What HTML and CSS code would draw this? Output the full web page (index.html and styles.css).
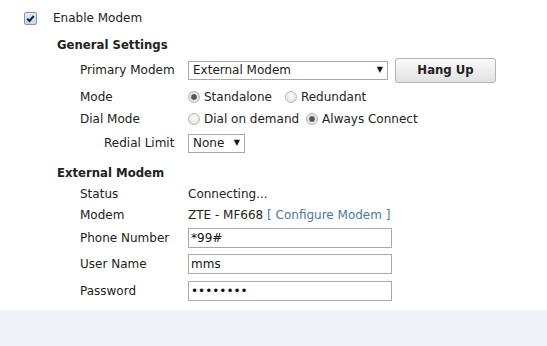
FILE: index.html
```html
<!DOCTYPE html>
<html lang="en">
  <head>
    <meta charset="UTF-8" />
    <meta name="viewport" content="width=device-width, initial-scale=1.0" />
    <title>Modem</title>
    <link rel="stylesheet" href="styles.css">
  </head>
  <body>
    <form class="modem">
      <label class="enable">
        <span class="check">
          <svg width="9" height="9" viewBox="0 0 9 9"><path d="M1.2 4.8 L3.5 7 L7.8 1.8" fill="none" stroke="#222" stroke-width="2"/></svg>
        </span>
        Enable Modem
      </label>

      <div class="section">
        <h2 class="head head-general">General Settings</h2>
        <div class="row row-primary">
          <span class="label">Primary Modem</span>
          <span class="select wide"><select><option>External Modem</option></select></span>
          <button type="button" class="hang">Hang Up</button>
        </div>
        <div class="row row-mode">
          <span class="label">Mode</span>
          <label class="opt"><input type="radio" name="mode" checked /> Standalone</label>
          <label class="opt"><input type="radio" name="mode" /> Redundant</label>
        </div>
        <div class="row row-dial">
          <span class="label">Dial Mode</span>
          <label class="opt"><input type="radio" name="dial" /> Dial on demand</label>
          <label class="opt"><input type="radio" name="dial" checked /> Always Connect</label>
        </div>
        <div class="row row-redial">
          <span class="label sub">Redial Limit</span>
          <span class="select small"><select><option>None</option></select></span>
        </div>

        <h2 class="head head-ext">External Modem</h2>
        <div class="row row-status">
          <span class="label">Status</span>
          <span>Connecting...</span>
        </div>
        <div class="row row-modem">
          <span class="label">Modem</span>
          <span>ZTE - MF668 <a href="#" class="link">[ Configure Modem ]</a></span>
        </div>
        <div class="row row-phone">
          <span class="label">Phone Number</span>
          <input type="text" class="field" value="*99#" />
        </div>
        <div class="row row-user">
          <span class="label">User Name</span>
          <input type="text" class="field" value="mms" />
        </div>
        <div class="row row-pass">
          <span class="label">Password</span>
          <input type="password" class="field" value="12345678" />
        </div>
      </div>
    </form>
    <div class="footer"></div>
  </body>
</html>
```

FILE: styles.css
```css
body {
  margin: 0;
  font-family: "DejaVu Sans", Verdana, sans-serif;
  font-size: 12px;
  color: #222;
  background-color: white;
}
.modem {
  padding: 7px 0 5px 24px;
}
.enable {
  display: flex;
  align-items: center;
  height: 22px;
}
.check {
  display: flex;
  align-items: center;
  justify-content: center;
  width: 11px;
  height: 11px;
  border: 1px solid #7d95c4;
  border-radius: 2px;
  background: linear-gradient(#e4ebf7, #c9d6ee);
  margin-right: 16px;
}
.section {
  margin-left: 33px;
}
.head {
  margin: 0;
  font-size: 11.7px;
  font-weight: bold;
  height: 20px;
  display: flex;
  align-items: center;
}
.head-general {
  margin-top: 6px;
}
.head-ext {
  margin-top: 6px;
}
.row {
  display: flex;
  align-items: center;
  padding-left: 23px;
}
.label {
  width: 108px;
  flex: none;
}
.label.sub {
  width: 84px;
  padding-left: 24px;
}
.row-primary { height: 30px; }
.row-mode { height: 24px; }
.row-dial { height: 20px; }
.row-redial { height: 28px; }
.row-status { height: 22px; }
.row-modem { height: 20px; }
.row-phone { height: 26px; }
.row-user { height: 26px; }
.row-pass { height: 28px; }

.select {
  position: relative;
  display: inline-block;
}
.select select {
  appearance: none;
  font-family: inherit;
  font-size: 12px;
  color: #222;
  background: white;
  border: 1px solid #a9a9a9;
  border-radius: 0;
  height: 19px;
  padding: 0 0 0 4px;
  margin: 0;
}
.select::after {
  content: "\25BC";
  position: absolute;
  right: 5px;
  top: 4px;
  font-size: 8px;
  color: #111;
  pointer-events: none;
}
.select.wide select {
  width: 200px;
}
.select.small select {
  width: 57px;
}
.hang {
  margin-left: 7px;
  width: 101px;
  height: 25px;
  font-family: inherit;
  font-size: 11.7px;
  font-weight: bold;
  color: #222;
  border: 1px solid #b5b5b5;
  border-radius: 3px;
  background: linear-gradient(#fafafa, #e2e2e2);
}
.opt {
  display: flex;
  align-items: center;
  margin-right: 8px;
}
.opt input {
  appearance: none;
  width: 12px;
  height: 12px;
  margin: 0 4px 0 0;
  border: 1px solid #b8b8b8;
  border-radius: 50%;
  background: radial-gradient(circle at 50% 40%, #fdfdfd, #dcdcdc);
}
.opt input:checked {
  background: radial-gradient(circle, #555 0 2.2px, #8a8a8a 2.8px, #e6e6e6 3.4px, #d6d6d6);
}
.row-mode .opt:first-of-type {
  margin-right: 13px;
}
.row-dial .opt:first-of-type {
  margin-right: 7px;
}
.link {
  color: #4a78a8;
  text-decoration: none;
}
.field {
  width: 204px;
  height: 20px;
  box-sizing: border-box;
  border: 1px solid #a9a9a9;
  padding: 0 2px;
  margin: 0;
  font-family: inherit;
  font-size: 12px;
  color: #111;
}
.footer {
  height: 40px;
  background-color: #f0f3f8;
}
```
